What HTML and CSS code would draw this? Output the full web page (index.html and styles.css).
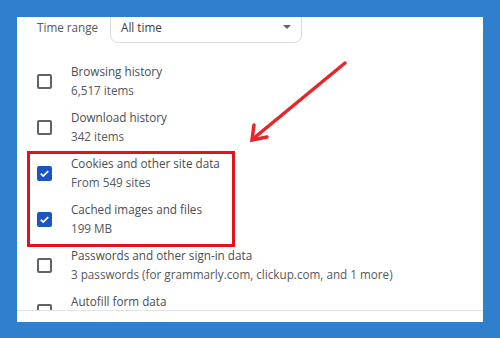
FILE: index.html
```html
<!DOCTYPE html>
<html>
<head>
<meta charset="utf-8">
<link rel="stylesheet" href="styles.css">
</head>
<body>
<div class="panel">
  <div class="scroll">
    <div class="content">
      <div class="range">
        <span class="range-label">Time range</span>
        <div class="select">
          <span>All time</span>
          <span class="caret"></span>
        </div>
      </div>
      <div class="list">
        <div class="row">
          <span class="box"></span>
          <div class="text"><div class="title">Browsing history</div><div class="sub">6,517 items</div></div>
        </div>
        <div class="row">
          <span class="box"></span>
          <div class="text"><div class="title">Download history</div><div class="sub">342 items</div></div>
        </div>
        <div class="row">
          <span class="box checked"><svg viewBox="0 0 16 16" width="15" height="15"><path d="M4 8.2l2.6 2.5L12 5.4" fill="none" stroke="#fff" stroke-width="1.8"/></svg></span>
          <div class="text"><div class="title">Cookies and other site data</div><div class="sub">From 549 sites</div></div>
        </div>
        <div class="row">
          <span class="box checked"><svg viewBox="0 0 16 16" width="15" height="15"><path d="M4 8.2l2.6 2.5L12 5.4" fill="none" stroke="#fff" stroke-width="1.8"/></svg></span>
          <div class="text"><div class="title">Cached images and files</div><div class="sub">199 MB</div></div>
        </div>
        <div class="row">
          <span class="box"></span>
          <div class="text"><div class="title">Passwords and other sign-in data</div><div class="sub">3 passwords (for grammarly.com, clickup.com, and 1 more)</div></div>
        </div>
        <div class="row">
          <span class="box"></span>
          <div class="text"><div class="title">Autofill form data</div><div class="sub">&nbsp;</div></div>
        </div>
      </div>
    </div>
  </div>
  <div class="footer"></div>
  <div class="highlight"></div>
</div>
<svg class="arrow" width="500" height="338" viewBox="0 0 500 338">
  <g stroke="#e8262a" stroke-width="3.5" stroke-linecap="round" fill="none">
    <path d="M345 63 L254 138"/>
    <path d="M254 125 L252 140 L267 137"/>
  </g>
</svg>
</body>
</html>
```

FILE: styles.css
```css
html, body {
  margin: 0;
  padding: 0;
}
body {
  width: 500px;
  height: 338px;
  background: #2f7fcc;
  padding: 17px 17px 16px 17px;
  box-sizing: border-box;
  font-family: "Open Sans", "Noto Sans", sans-serif;
  font-size: 11.7px;
  color: #4a4d52;
  position: relative;
  overflow: hidden;
}
.panel {
  width: 466px;
  height: 305px;
  background: #fff;
  display: flex;
  flex-direction: column;
  position: relative;
}
.scroll {
  flex: 1;
  overflow: hidden;
}
.content {
  margin-top: -6px;
}
.range {
  display: flex;
  align-items: center;
  height: 32px;
  padding-left: 20px;
}
.range-label {
  width: 73px;
  color: #55585c;
}
.select {
  width: 192px;
  height: 32px;
  box-sizing: border-box;
  border: 1px solid #dadce0;
  border-radius: 8px;
  display: flex;
  align-items: center;
  justify-content: space-between;
  padding: 0 10px 0 10px;
  color: #3c4043;
}
.caret {
  width: 0;
  height: 0;
  border-left: 4px solid transparent;
  border-right: 4px solid transparent;
  border-top: 4px solid #5f6368;
}
.list {
  margin-top: 15px;
}
.row {
  height: 46px;
  display: flex;
  align-items: center;
  padding-left: 20px;
}
.box {
  width: 15px;
  height: 15px;
  box-sizing: border-box;
  border: 2px solid #5f6368;
  border-radius: 2px;
  flex: none;
  margin-right: 19px;
  display: flex;
  align-items: center;
  justify-content: center;
}
.box.checked {
  background: #1b55c2;
  border-color: #1b55c2;
}
.box svg {
  flex: none;
}
.text {
  line-height: 19px;
}
.title {
  color: #4a4d52;
}
.sub {
  color: #55585c;
}
.footer {
  height: 11px;
  border-top: 1px solid #e3e3e3;
  flex: none;
}
.highlight {
  position: absolute;
  left: 10px;
  top: 134px;
  width: 208px;
  height: 96px;
  border: 3px solid #e0121c;
  box-sizing: border-box;
}
.arrow {
  position: absolute;
  left: 0;
  top: 0;
}
```
